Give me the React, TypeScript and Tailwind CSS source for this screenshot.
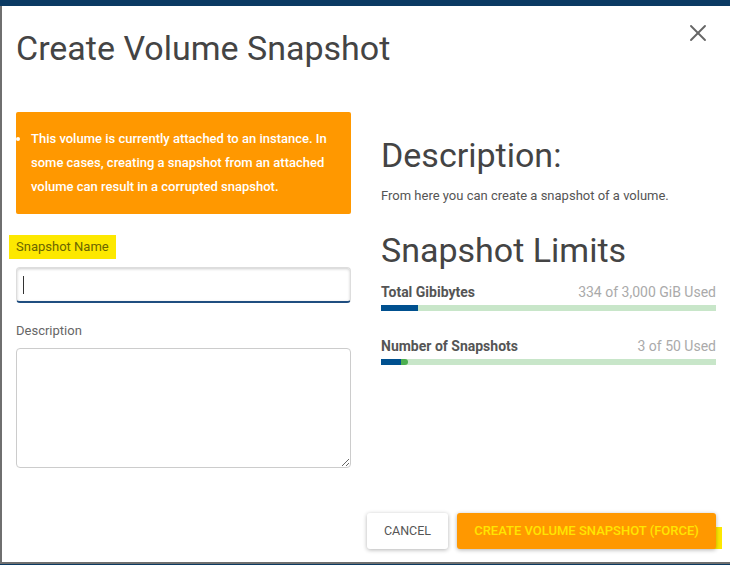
import { X } from "lucide-react";

const limits = [
  { label: "Total Gibibytes", usage: "334 of 3,000 GiB Used", used: 334, max: 3000, extra: 0 },
  { label: "Number of Snapshots", usage: "3 of 50 Used", used: 3, max: 50, extra: 1 },
];

const LimitBar = ({ label, usage, used, max, extra }: (typeof limits)[number]) => (
  <div className="mb-[26px]">
    <div className="flex items-center justify-between text-[14px] leading-[18px]">
      <span className="font-bold text-[#555]">{label}</span>
      <span className="text-[#aaa]">{usage}</span>
    </div>
    <div className="mt-[4px] flex h-[6px] w-full bg-[#c8e6c9]">
      <div className="h-full bg-[#00508f]" style={{ width: `${(used / max) * 100}%` }} />
      {extra > 0 && (
        <div className="h-full rounded-r-full bg-[#4caf50]" style={{ width: `${(extra / max) * 100}%` }} />
      )}
    </div>
  </div>
);

export default function App() {
  return (
    <div className="h-[565px] w-[730px] overflow-hidden bg-[#0b3a63] pt-[6px] font-['Roboto',sans-serif]">
      <div className="h-[558px] border-b-[2px] border-l-[2px] border-[#6f6f6f] bg-white">
        {/* header */}
        <div className="flex items-start justify-between pl-[14px] pr-[18px] pt-[22px]">
          <h1 className="text-[34px] leading-[40px] font-normal text-[#444]">Create Volume Snapshot</h1>
          <X className="mt-[-9px] h-[28px] w-[28px] text-[#666]" strokeWidth={1.6} />
        </div>

        <div className="mt-[44px] flex gap-[30px] pl-[14px] pr-[14px]">
          {/* left column */}
          <div className="w-[335px]">
            <div className="rounded-[2px] bg-[#ff9800] py-[15px] pr-[14px] pl-[15px] text-[13px] leading-[24px] font-medium text-white">
              <ul className="list-disc">
                <li>
                  This volume is currently attached to an instance. In some cases, creating a snapshot from an attached
                  volume can result in a corrupted snapshot.
                </li>
              </ul>
            </div>

            <label className="mt-[21px] ml-[-7px] inline-block bg-[#fde800] px-[7px] text-[13px] leading-[24px] text-[#6b6500]">
              Snapshot Name
            </label>
            <div className="mt-[8px] h-[36px] rounded-[4px] border border-[#ddd] border-b-[2px] border-b-[#1f4e80] bg-white shadow-[inset_0_1px_3px_rgba(0,0,0,0.2)]">
              <div className="mt-[8px] ml-[6px] h-[18px] w-px bg-[#333]" />
            </div>

            <label className="mt-[18px] block text-[13px] leading-[20px] text-[#666]">Description</label>
            <textarea className="mt-[7px] block h-[120px] w-full resize-y rounded-[4px] border border-[#ccc] bg-white outline-none" />
          </div>

          {/* right column */}
          <div className="w-[335px] pt-[23px]">
            <h2 className="text-[34px] leading-[40px] font-normal text-[#444]">Description:</h2>
            <p className="mt-[12px] text-[13px] leading-[18px] text-[#555]">From here you can create a snapshot of a volume.</p>
            <h2 className="mt-[25px] text-[34px] leading-[40px] font-normal text-[#444]">Snapshot Limits</h2>
            <div className="mt-[13px]">
              {limits.map((l) => (
                <LimitBar key={l.label} {...l} />
              ))}
            </div>
          </div>
        </div>

        {/* footer */}
        <div className="mt-[45px] flex justify-end gap-[9px] pr-[14px]">
          <button className="h-[36px] w-[81px] rounded-[3px] bg-white text-[12.5px] text-[#555] shadow-[0_1px_4px_rgba(0,0,0,0.3)]">
            CANCEL
          </button>
          <div className="relative">
            <div className="absolute top-[14px] right-[-6px] bottom-0 w-[40px] bg-[#fde800]" />
            <button className="relative h-[36px] w-[259px] rounded-[3px] bg-[#ff9800] text-[13px] font-medium text-[#ffe500] shadow-[0_1px_4px_rgba(0,0,0,0.3)]">
              CREATE VOLUME SNAPSHOT (FORCE)
            </button>
          </div>
        </div>
      </div>
    </div>
  );
}
